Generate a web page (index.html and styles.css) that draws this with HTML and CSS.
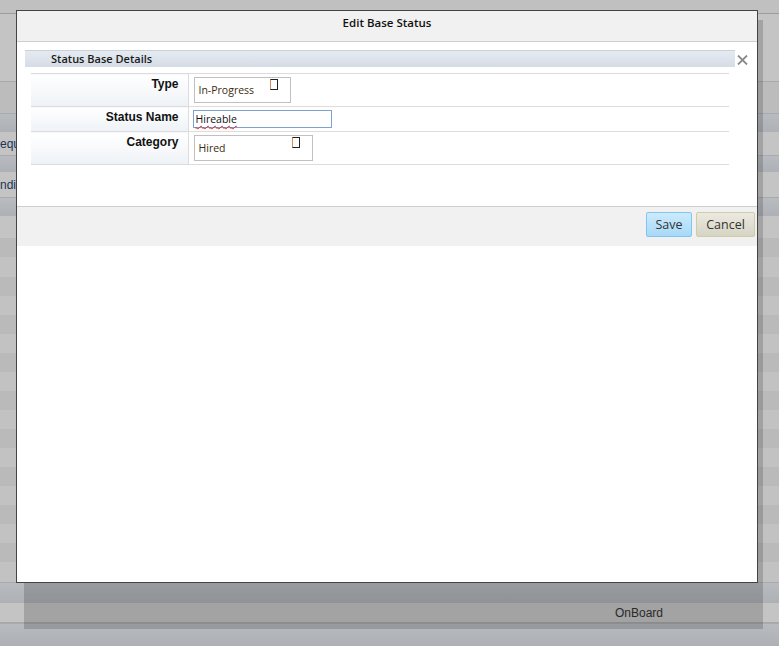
FILE: index.html
```html
<!DOCTYPE html>
<html>
<head>
<meta charset="utf-8">
<link rel="stylesheet" href="styles.css">
</head>
<body>
<div class="page">
  <div class="row r-top"></div>
  <div class="row r-light h67"></div>
  <div class="row r-mid h32"></div>
  <div class="row r-blue h19"></div>
  <div class="row r-light h23 txt"><span>equ</span></div>
  <div class="row r-blue h17"></div>
  <div class="row r-light h25 txt"><span>ndid</span></div>
  <div class="row r-blue h19"></div>
  <div class="row r-light h22"></div>
  <div class="row r-dark h19"></div>
  <div class="row r-alt h20"></div>
  <div class="row r-dark h19"></div>
  <div class="row r-alt h19"></div>
  <div class="row r-dark h19"></div>
  <div class="row r-alt h19"></div>
  <div class="row r-dark h19"></div>
  <div class="row r-alt h19"></div>
  <div class="row r-dark h19"></div>
  <div class="row r-alt h19"></div>
  <div class="row r-dark h19"></div>
  <div class="row r-alt h19"></div>
  <div class="row r-dark h19"></div>
  <div class="row r-alt h19"></div>
  <div class="row r-dark h19"></div>
  <div class="row r-alt h19"></div>
  <div class="row r-dark h19"></div>
  <div class="row r-alt h20"></div>
  <div class="row r-blue h21"></div>
  <div class="row r-light h20 onboard"><span>OnBoard</span></div>
  <div class="row r-blue h23"></div>
</div>

<div class="shadow"></div>

<div class="dialog">
  <div class="dlg-title">Edit Base Status</div>
  <div class="dlg-body">
    <div class="section-head">
      <div class="section-bar">Status Base Details</div>
      <svg class="close" width="11" height="10" viewBox="0 0 11 10"><path d="M1 0.5 L10 9.5 M10 0.5 L1 9.5" stroke="#8a8a8a" stroke-width="1.8" fill="none"/></svg>
    </div>
    <table class="form">
      <tr class="tr1">
        <th>Type</th>
        <td><div class="sel sel-type"><span class="sel-text">In-Progress</span><span class="tofu"></span></div></td>
      </tr>
      <tr class="tr2">
        <th>Status Name</th>
        <td><div class="inp"><span class="spell">Hireable</span></div></td>
      </tr>
      <tr class="tr3">
        <th>Category</th>
        <td><div class="sel sel-cat"><span class="sel-text">Hired</span><span class="tofu"></span></div></td>
      </tr>
    </table>
  </div>
  <div class="dlg-foot">
    <button class="btn btn-save">Save</button>
    <button class="btn btn-cancel">Cancel</button>
  </div>
</div>
</body>
</html>
```
FILE: styles.css
```css
html, body {
  margin: 0;
  padding: 0;
  overflow: hidden;
}
body {
  width: 779px;
  height: 646px;
  position: relative;
  background: #c2c2c2;
  font-family: "Liberation Sans", Arial, sans-serif;
}
.page {
  display: flex;
  flex-direction: column;
}
.row { box-sizing: border-box; }
.r-top { height: 14px; background: #c0c0c0; border-bottom: 1px solid #9c9c9c; }
.r-light { background: #c4c4c4; }
.r-mid { background: #bcbcbc; border-top: 1px solid #a9a9a9; }
.r-blue { background: linear-gradient(#b8bcc0, #adb1b5); border-top: 1px solid #a8abae; }
.r-dark { background: #bababa; }
.r-alt { background: #c2c2c2; }
.h17 { height: 17px; } .h19 { height: 19px; } .h20 { height: 20px; }
.h21 { height: 21px; } .h22 { height: 22px; } .h23 { height: 23px; }
.h25 { height: 25px; } .h32 { height: 32px; } .h67 { height: 67px; }
.txt {
  display: flex;
  align-items: center;
  font-size: 12px;
  color: #1d3557;
  overflow: hidden;
  white-space: nowrap;
}
.onboard {
  display: flex;
  align-items: center;
  padding-left: 615px;
  font-size: 12px;
  color: #333;
  border-bottom: 1px solid #a8a8a8;
}

.shadow {
  position: absolute;
  left: 24px;
  top: 20px;
  width: 739px;
  height: 609px;
  background: rgba(0, 0, 0, 0.17);
}

.dialog {
  position: absolute;
  left: 16px;
  top: 10px;
  width: 740px;
  height: 571px;
  border: 1px solid #444;
  background: #fff;
  display: flex;
  flex-direction: column;
}
.dlg-title {
  height: 31px;
  flex-shrink: 0;
  box-sizing: border-box;
  padding-top: 4px;
  background: #f1f1f1;
  border-bottom: 1px solid #cfcfcf;
  text-align: center;
  font-family: "Open Sans", sans-serif;
  font-weight: 600;
  font-size: 11.5px;
  line-height: 16px;
  color: #111;
}
.dlg-body {
  height: 164px;
  flex-shrink: 0;
  box-sizing: border-box;
  padding: 8px 0 0 8px;
}
.section-head {
  display: flex;
  align-items: center;
}
.section-bar {
  width: 710px;
  height: 17px;
  box-sizing: border-box;
  border-top: 1px solid #c8d0da;
  background: linear-gradient(#e6ebf1, #d4dce6);
  padding-left: 26px;
  font-family: "Open Sans", sans-serif;
  font-weight: 600;
  font-size: 11px;
  line-height: 16px;
  color: #1a1a1a;
}
.close {
  margin-left: 2px;
  margin-top: 2px;
}
.form {
  margin: 6px 0 0 6px;
  width: 698px;
  border-collapse: collapse;
}
.form tr { border-top: 1px solid #dcdcdc; border-bottom: 1px solid #dcdcdc; }
.form th {
  width: 157px;
  box-sizing: border-box;
  padding: 3px 9px 0 0;
  text-align: right;
  vertical-align: top;
  font-size: 12px;
  font-weight: bold;
  color: #111;
  background: linear-gradient(to bottom, #ffffff, #eef2f6);
  border-right: 1px solid #dcdcdc;
}
.form td {
  padding: 3px 0 3px 5px;
  vertical-align: top;
}
.tr1 { height: 32px; }
.tr2 { height: 24px; }
.tr3 { height: 32px; }
.tr2 td { padding: 3px 0 3px 4px; }
.sel {
  box-sizing: border-box;
  height: 26px;
  border: 1px solid #c0c0c0;
  position: relative;
  display: flex;
  align-items: center;
  padding-left: 4px;
  font-family: "Open Sans", sans-serif;
  font-size: 10.5px;
  color: #3b2b10;
}
.sel-type { width: 97px; }
.sel-cat { width: 119px; }
.tofu {
  position: absolute;
  top: 1px;
  width: 6px;
  height: 9px;
  border: 1px solid #222;
  border-left-color: #d88a5a;
}
.sel-type .tofu { left: 75px; }
.sel-cat .tofu { left: 97px; }
.inp {
  box-sizing: border-box;
  width: 139px;
  height: 18px;
  border: 1px solid #7da2ce;
  padding-left: 2px;
  font-family: "Open Sans", sans-serif;
  font-size: 10.5px;
  line-height: 16px;
  color: #111;
}
.spell {
  text-decoration: underline wavy #e02020;
  text-decoration-thickness: 1px;
  text-underline-offset: 2px;
}
.dlg-foot {
  height: 40px;
  flex-shrink: 0;
  box-sizing: border-box;
  background: #f1f1f1;
  border-top: 1px solid #cfcfcf;
  display: flex;
  justify-content: flex-end;
  align-items: flex-start;
  gap: 4px;
  padding: 5px 2px 0 0;
}
.btn {
  height: 25px;
  box-sizing: border-box;
  font-family: "Open Sans", sans-serif;
  font-size: 12.5px;
  color: #333;
  padding: 0;
  border-radius: 2px;
}
.btn-save {
  width: 46px;
  border: 1px solid #7fc6f1;
  background: linear-gradient(#cdeafc, #a8d9f8);
}
.btn-cancel {
  width: 59px;
  border: 1px solid #cfcca8;
  background: linear-gradient(#eceae0, #d6d4c4);
}
```
